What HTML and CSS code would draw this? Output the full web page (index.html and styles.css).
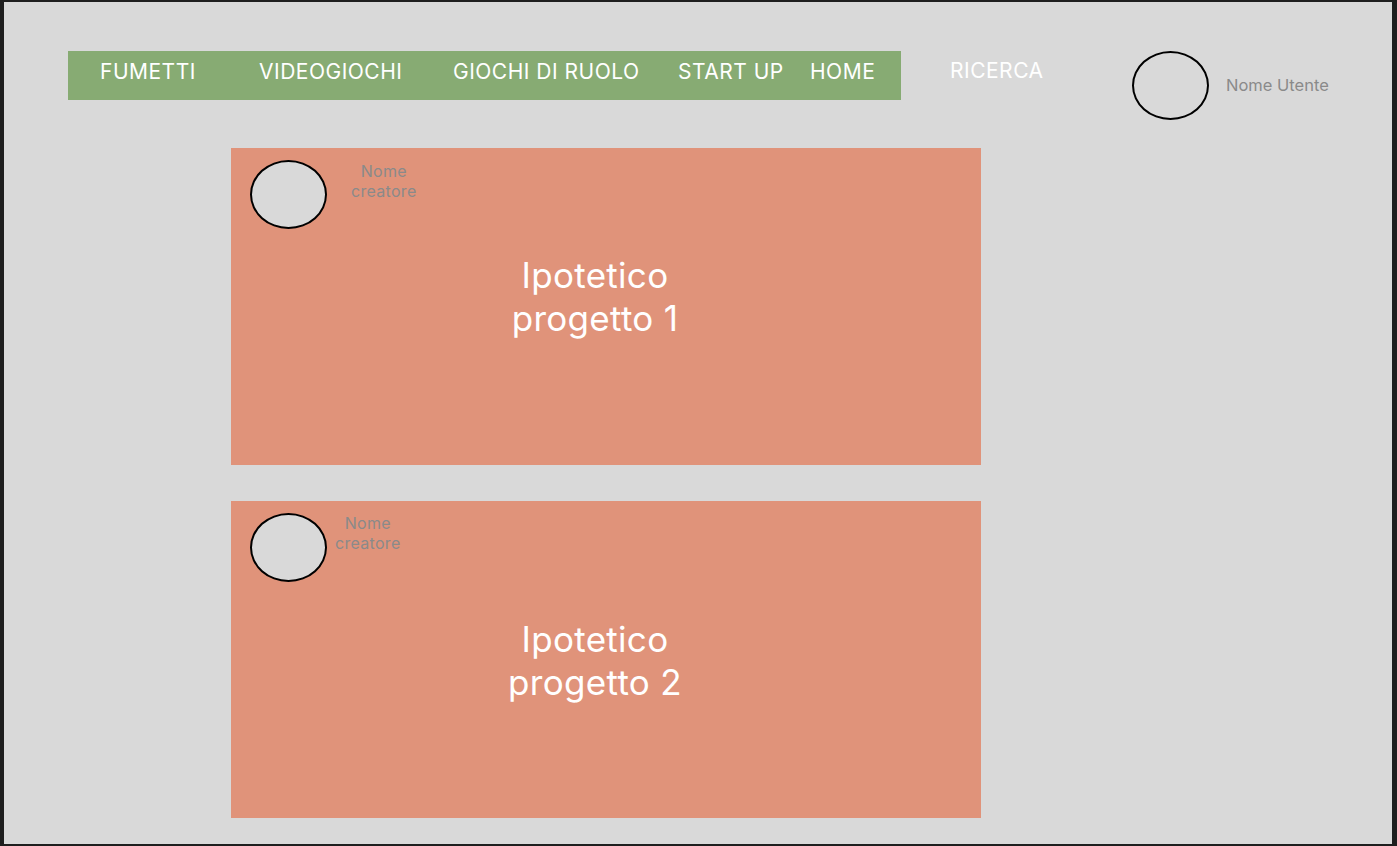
FILE: index.html
```html
<!DOCTYPE html>
<html lang="it">
<head>
<meta charset="utf-8">
<title>Progetti</title>
<link rel="stylesheet" href="styles.css">
</head>
<body>
<div class="frame">
  <header class="header">
    <nav class="nav">
      <span class="nav-item w-fumetti">FUMETTI</span>
      <span class="nav-item w-video">VIDEOGIOCHI</span>
      <span class="nav-item w-gdr">GIOCHI DI RUOLO</span>
      <span class="nav-item w-startup">START UP</span>
      <span class="nav-item">HOME</span>
    </nav>
    <div class="search">RICERCA</div>
    <div class="avatar avatar-user"></div>
    <div class="user-name">Nome Utente</div>
  </header>

  <main class="feed">
    <article class="card">
      <div class="card-head">
        <div class="avatar avatar-creator"></div>
        <div class="creator">Nome<br>creatore</div>
      </div>
      <h2 class="card-title">Ipotetico<br>progetto 1</h2>
    </article>
    <article class="card">
      <div class="card-head">
        <div class="avatar avatar-creator"></div>
        <div class="creator creator-near">Nome<br>creatore</div>
      </div>
      <h2 class="card-title card-title-low">Ipotetico<br>progetto 2</h2>
    </article>
  </main>
</div>
</body>
</html>
```

FILE: styles.css
```css
* { box-sizing: border-box; }

html, body {
  margin: 0;
  padding: 0;
  background: #1e1e1e;
}

body {
  width: 1397px;
  height: 846px;
  padding: 2px 5px 2px 4px;
  font-family: Inter, "Noto Sans", "Liberation Sans", sans-serif;
}

.frame {
  width: 100%;
  height: 100%;
  background: #d9d9d9;
  overflow: hidden;
  padding-top: 49px;
}

.header {
  display: flex;
  align-items: flex-start;
  padding-left: 64px;
}

.nav {
  width: 833px;
  height: 49px;
  background: #87ab73;
  display: flex;
  align-items: center;
  padding-left: 32px;
  padding-bottom: 8px;
}

.nav-item {
  color: #ffffff;
  font-size: 21px;
  letter-spacing: 0.5px;
  line-height: 24px;
  white-space: nowrap;
}

.w-fumetti { width: 159px; }
.w-video { width: 194px; }
.w-gdr { width: 225px; }
.w-startup { width: 132px; }

.search {
  width: 182px;
  margin-left: 49px;
  margin-top: 8px;
  color: #ffffff;
  font-size: 21px;
  letter-spacing: 0.5px;
  line-height: 24px;
}

.avatar {
  border: 2px solid #000000;
  border-radius: 50%;
  background: #d9d9d9;
  flex: none;
}

.avatar-user {
  width: 77px;
  height: 69px;
}

.user-name {
  margin-left: 17px;
  margin-top: 24px;
  color: #8a8a8a;
  font-size: 16.5px;
  line-height: 20px;
}

.feed {
  display: flex;
  flex-direction: column;
  gap: 36px;
  padding-left: 227px;
  margin-top: 28px;
}

.card {
  width: 750px;
  height: 317px;
  background: #e0937a;
  padding: 12px 0 0 19px;
}

.card-head {
  display: flex;
  align-items: flex-start;
}

.avatar-creator {
  width: 77px;
  height: 69px;
}

.creator {
  margin-left: 24px;
  margin-top: 1px;
  color: #8a8a8a;
  font-size: 16px;
  letter-spacing: 0.3px;
  line-height: 20px;
  text-align: center;
}

.creator-near {
  margin-left: 8px;
  margin-top: 0;
}

.card-title {
  margin: 25px 0 0 -19px;
  padding-right: 22px;
  color: #ffffff;
  font-size: 35px;
  letter-spacing: 0.3px;
  font-weight: 400;
  line-height: 43px;
  text-align: center;
}

.card-title-low {
  margin-top: 36px;
}
```
